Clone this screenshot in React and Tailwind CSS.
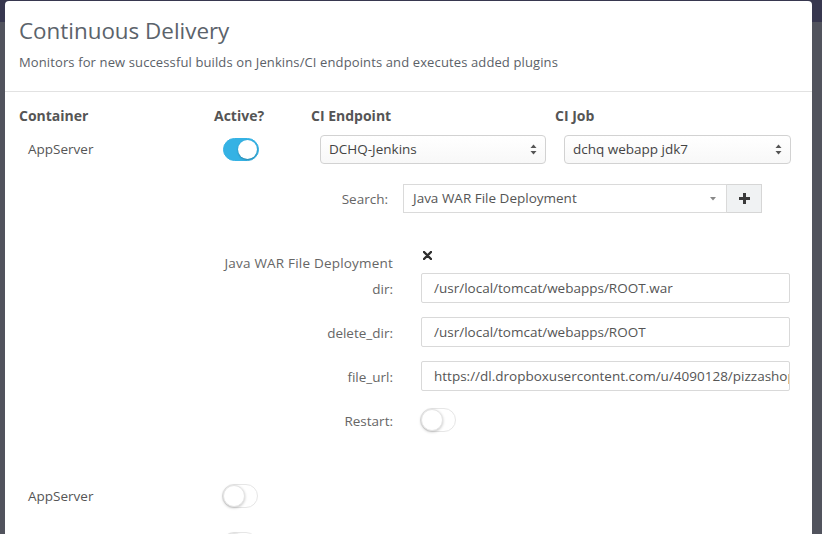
import React from 'react'

const FONT = { fontFamily: '"Open Sans", "Liberation Sans", sans-serif' }

function Toggle({ on }) {
  if (on) {
    return (
      <div className="relative w-[36px] h-[23px] rounded-full bg-[#35b2e4] border border-[#35b2e4]">
        <div className="absolute right-[1px] top-[1px] w-[19px] h-[19px] rounded-full bg-white shadow-[0_1px_2px_rgba(0,0,0,0.25)]" />
      </div>
    )
  }
  return (
    <div className="relative w-[36px] h-[24px] rounded-full bg-white border border-[#e6e6e6]">
      <div className="absolute left-0 top-0 w-[22px] h-[22px] rounded-full bg-white border border-[#e4e4e4] shadow-[0_1px_3px_rgba(0,0,0,0.22)]" />
    </div>
  )
}

function Arrows() {
  return (
    <svg width="7" height="11" viewBox="0 0 7 11" className="shrink-0">
      <path d="M3.5 0.5 L6.5 4 H0.5 Z" fill="#555" />
      <path d="M3.5 10.5 L6.5 7 H0.5 Z" fill="#555" />
    </svg>
  )
}

function NativeSelect({ value, w }) {
  return (
    <div
      className={`${w} h-[29px] flex items-center justify-between pl-[8px] pr-[8px] rounded-[4px] border border-[#d2d2d2] bg-gradient-to-b from-white to-[#f8f8f8] text-[13.5px] text-[#444]`}
    >
      <span>{value}</span>
      <Arrows />
    </div>
  )
}

function TextInput({ value }) {
  return (
    <div className="w-[369px] h-[30px] flex items-center px-[12px] border border-[#d9d9d9] rounded-[2px] bg-white text-[13.5px] text-[#555] overflow-hidden whitespace-nowrap">
      {value}
    </div>
  )
}

function Field({ label, value }) {
  return (
    <div className="flex items-center">
      <div className="w-[374px] text-right text-[13.5px] text-[#666] pt-[3px]">{label}</div>
      <div className="ml-[28px]">
        <TextInput value={value} />
      </div>
    </div>
  )
}

export default function App() {
  return (
    <div className="relative h-[534px] w-full overflow-hidden bg-[#51535d]" style={FONT}>
      <div className="h-[22px] bg-[#37374f]" />

      {/* modal */}
      <div className="absolute left-[5px] top-[1px] w-[807px] h-[560px] bg-white rounded-[4px]">
        <div className="px-[14px] pt-[14px] pb-[19px] border-b border-[#e2e2e2]">
          <h1 className="text-[22.4px] leading-[32px] text-[#5b636b]">Continuous Delivery</h1>
          <p className="mt-[5px] text-[13px] leading-[20px] tracking-[0.12px] text-[#5b6168]">
            Monitors for new successful builds on Jenkins/CI endpoints and executes added plugins
          </p>
        </div>

        <div className="px-[14px] pt-[14px]">
          {/* column headers */}
          <div className="flex text-[14px] leading-[20px] font-bold text-[#555]">
            <div className="w-[195px]">Container</div>
            <div className="w-[97px]">Active?</div>
            <div className="w-[244px]">CI Endpoint</div>
            <div>CI Job</div>
          </div>

          {/* row 1 */}
          <div className="flex items-center mt-[9px]">
            <div className="w-[195px] pl-[9px] text-[13.5px] text-[#555]">AppServer</div>
            <div className="w-[97px] pl-[9px]">
              <Toggle on />
            </div>
            <div className="w-[244px] pl-[9px]">
              <NativeSelect value="DCHQ-Jenkins" w="w-[226px]" />
            </div>
            <div className="pl-[9px]">
              <NativeSelect value="dchq webapp jdk7" w="w-[227px]" />
            </div>
          </div>

          {/* search */}
          <div className="flex items-center mt-[20px]">
            <div className="w-[369px] text-right text-[13.5px] text-[#666] pt-[2px]">Search:</div>
            <div className="ml-[15px] flex">
              <div className="w-[324px] h-[29px] flex items-center justify-between pl-[9px] pr-[10px] border border-[#dadada] bg-white text-[13.5px] text-[#555]">
                <span>Java WAR File Deployment</span>
                <svg width="6" height="4" viewBox="0 0 6 4">
                  <path d="M0 0 H6 L3 3.5 Z" fill="#888" />
                </svg>
              </div>
              <div className="w-[35px] h-[29px] flex items-center justify-center border border-l-0 border-[#d6d6d6] bg-[#f0f2f3]">
                <svg width="11" height="11" viewBox="0 0 11 11">
                  <path d="M4 0 H7 V4 H11 V7 H7 V11 H4 V7 H0 V4 H4 Z" fill="#3a3a3a" />
                </svg>
              </div>
            </div>
          </div>

          {/* plugin */}
          <div className="flex items-start mt-[35px]">
            <div className="w-[374px] text-right text-[13.5px] leading-[20px] tracking-[0.2px] text-[#666] mt-[5px]">
              Java WAR File Deployment
            </div>
            <div className="ml-[30px] mt-[3px]">
              <svg width="9" height="9" viewBox="0 0 9 9">
                <path d="M1 1 L8 8 M8 1 L1 8" stroke="#2e2e2e" strokeWidth="2.4" strokeLinecap="round" />
              </svg>
            </div>
          </div>

          <div className="flex flex-col gap-[14px]">
            <Field label="dir:" value="/usr/local/tomcat/webapps/ROOT.war" />
            <Field label="delete_dir:" value="/usr/local/tomcat/webapps/ROOT" />
            <Field label="file_url:" value="https://dl.dropboxusercontent.com/u/4090128/pizzashop.war" />
          </div>

          <div className="flex items-center mt-[17px]">
            <div className="w-[374px] text-right text-[13.5px] text-[#666] pt-[2px]">Restart:</div>
            <div className="ml-[27px]">
              <Toggle />
            </div>
          </div>

          {/* row 2 */}
          <div className="flex items-center mt-[52px]">
            <div className="w-[195px] pl-[9px] text-[13.5px] text-[#555]">AppServer</div>
            <div className="w-[97px] pl-[8px]">
              <Toggle />
            </div>
          </div>

          {/* row 3, only its switch peeks in above the fold */}
          <div className="flex items-center mt-[24px]">
            <div className="w-[195px]" />
            <div className="w-[97px] pl-[8px]">
              <Toggle />
            </div>
          </div>
        </div>
      </div>
    </div>
  )
}
